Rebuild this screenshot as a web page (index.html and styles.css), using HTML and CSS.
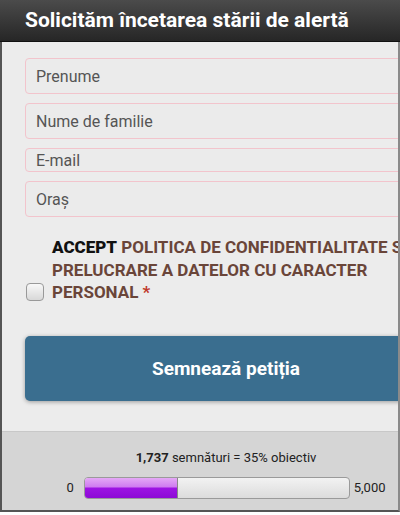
FILE: index.html
```html
<!DOCTYPE html>
<html lang="ro">
<head>
  <meta charset="UTF-8">
  <meta name="viewport" content="width=device-width, initial-scale=1.0">
  <title>Petitie</title>
  <link rel="stylesheet" href="styles.css">
</head>
<body>
  <div class="header">
    <h1>Solicităm încetarea stării de alertă</h1>
  </div>

  <div class="panel">
    <div class="panel-inner">
      <form class="petition-form">
        <input class="field" type="text" placeholder="Prenume">
        <input class="field" type="text" placeholder="Nume de familie">
        <input class="field field-small" type="email" placeholder="E-mail">
        <input class="field" type="text" placeholder="Oraș">

        <label class="consent">
          <span class="checkbox"></span>
          <span class="consent-text"><b>ACCEPT</b> <span class="policy">POLITICA DE CONFIDENTIALITATE SI PRELUCRARE A DATELOR CU CARACTER PERSONAL</span> <span class="required">*</span></span>
        </label>

        <button class="sign-button" type="button">Semnează petiția</button>
      </form>

      <div class="stats">
        <p class="count"><b>1,737</b> semnături = 35% obiectiv</p>
        <div class="goal">
          <span class="goal-min">0</span>
          <div class="bar">
            <div class="bar-fill" style="width: 35%"></div>
          </div>
          <span class="goal-max">5,000</span>
        </div>
      </div>
    </div>
  </div>
</body>
</html>
```

FILE: styles.css
```css
body {
  margin: 0;
  width: 400px;
  overflow: hidden;
  background-color: #fff;
  font-family: Roboto, "Liberation Sans", Arial, sans-serif;
}

.header {
  height: 42px;
  background: linear-gradient(#4b4b4b, #262626);
  border-bottom: 1px solid #111;
  box-sizing: border-box;
}

.header h1 {
  margin: 0;
  padding-left: 25px;
  line-height: 40px;
  font-size: 21px;
  font-weight: bold;
  color: #fff;
  white-space: nowrap;
}

.panel {
  width: 400px;
  box-sizing: border-box;
  border-left: 2px solid #555;
  border-right: 2px solid #8a8a8a;
  border-bottom: 2px solid #555;
  overflow: hidden;
  background-color: #ececec;
}

.panel-inner {
  width: 452px;
  margin-left: -2px;
}

.petition-form {
  padding: 16px 25px 30px 25px;
}

.field {
  display: block;
  width: 100%;
  height: 36px;
  box-sizing: border-box;
  margin: 0 0 9px 0;
  padding: 0 10px;
  border: 1px solid #f2c4cc;
  border-radius: 4px;
  background-color: #ebebeb;
  font-family: inherit;
  font-size: 16px;
  color: #333;
}

.field::placeholder {
  color: #555;
}

.field-small {
  height: 24px;
}

.consent {
  display: flex;
  align-items: flex-end;
  gap: 8px;
  margin-top: 19px;
  padding-left: 1px;
}

.checkbox {
  flex: none;
  width: 18px;
  height: 18px;
  margin-bottom: 3px;
  box-sizing: border-box;
  border: 1px solid #999;
  border-radius: 4px;
  background: linear-gradient(#f8f8f8, #d8d8d8);
}

.consent-text {
  font-size: 17px;
  font-weight: bold;
  line-height: 22.5px;
  color: #111;
}

.policy {
  color: #6a4539;
}

.required {
  color: #c0392b;
}

.sign-button {
  display: block;
  width: 100%;
  height: 65px;
  margin-top: 32px;
  border: none;
  border-radius: 5px;
  background-color: #3a6e8f;
  box-shadow: 0 1px 4px rgba(0, 0, 0, 0.35);
  font-family: inherit;
  font-size: 19px;
  font-weight: bold;
  color: #fff;
}

.stats {
  background-color: #d5d5d5;
  border-top: 1px solid #c8c8c8;
  padding: 17px 0 11px 0;
  text-align: center;
}

.count {
  margin: 0 0 10px 0;
  font-size: 13px;
  line-height: 18px;
  color: #222;
}

.goal {
  display: flex;
  align-items: center;
  justify-content: center;
  font-size: 13px;
  color: #222;
}

.goal-min {
  margin-right: 10px;
}

.goal-max {
  margin-left: 4px;
}

.bar {
  width: 266px;
  height: 22px;
  box-sizing: border-box;
  border: 1px solid #9a9a9a;
  border-radius: 4px;
  overflow: hidden;
  background: linear-gradient(#f2f2f2, #dcdcdc);
}

.bar-fill {
  height: 100%;
  background: linear-gradient(#e4a8f6 0%, #cf7bf0 45%, #9d14e3 50%, #8d0ad6 100%);
  border-right: 1px solid #888;
}
```
